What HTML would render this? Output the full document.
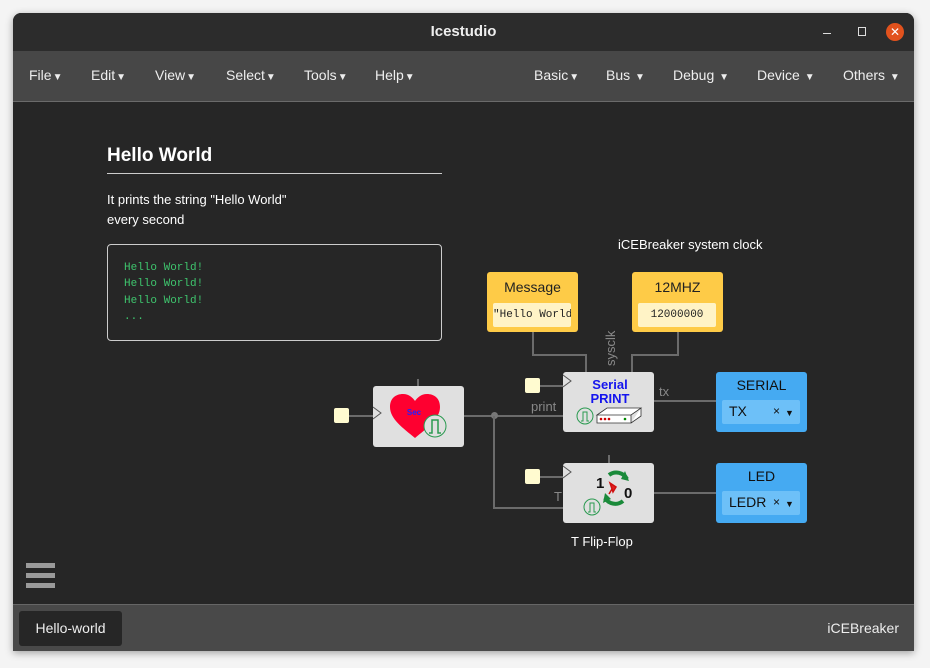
<!DOCTYPE html><html><head><style>
body{margin:0;width:930px;height:668px;background:#f4f4f4;font-family:"Liberation Sans",sans-serif;overflow:hidden;position:relative}
.win{position:absolute;left:13px;top:13px;width:901px;height:638px;background:#262626;border-radius:8px 8px 0 0;overflow:hidden;box-shadow:0 2px 8px rgba(0,0,0,.35)}
.title{position:absolute;left:0;top:0;width:901px;height:38px;background:#2c2c2c;color:#eee;font-weight:bold;font-size:15px;text-align:center;line-height:38px}
.menu{position:absolute;left:0;top:38px;width:901px;height:50px;background:#474747;border-bottom:1px solid #6a6a6a;color:#eee;font-size:14px}
.menu span{position:absolute;top:16px}
.menu i{font-style:normal;font-size:10px;margin-left:1px}
.foot{position:absolute;left:0;top:591px;width:901px;height:47px;background:#494949;border-top:1px solid #666;color:#eee;font-size:14px}
.a{position:absolute}
.blk{position:absolute;background:#e0e0e0;border-radius:3px}
.sq{position:absolute;width:15px;height:15px;background:#fffbd0;border-radius:2px}
.w{position:absolute;background:#6b6b6b}
.y{position:absolute;background:#fecb47;border-radius:3px;text-align:center;font-size:14px;color:#222}
.bl{position:absolute;background:#45aaf2;border-radius:3px;text-align:center;font-size:14px;color:#111}
.in{position:absolute;left:6px;top:28px;width:78px;height:24px;background:#6dc0f8;border-radius:2px;text-align:left;line-height:22px;font-size:14px}
</style></head><body>
<div class="win">
<div class="title">Icestudio
<span class="a" style="left:810px;top:20px;width:8px;height:1px;background:#ddd"></span>
<span class="a" style="left:845px;top:14px;width:6px;height:7px;border:1px solid #ddd"></span>
<span class="a" style="left:873px;top:10px;width:18px;height:18px;border-radius:50%;background:#e2521d;color:#fff;font-size:12px;line-height:18px;font-weight:normal">✕</span>
</div>
<div class="menu">
<span style="left:16px">File<i>▼</i></span><span style="left:78px">Edit<i>▼</i></span><span style="left:142px">View<i>▼</i></span><span style="left:213px">Select<i>▼</i></span><span style="left:291px">Tools<i>▼</i></span><span style="left:362px">Help<i>▼</i></span>
<span style="left:521px">Basic<i>▼</i></span><span style="left:593px">Bus <i>▼</i></span><span style="left:660px">Debug <i>▼</i></span><span style="left:744px">Device <i>▼</i></span><span style="left:830px">Others <i>▼</i></span>
</div>
<div class="a" style="left:94px;top:132px;color:#fff;font-size:19px;font-weight:bold">Hello World</div>
<div class="a" style="left:94px;top:160px;width:335px;height:1px;background:#ccc"></div>
<div class="a" style="left:94px;top:177px;color:#fff;font-size:13px;line-height:20px">It prints the string "Hello World"<br>every second</div>
<div class="a" style="left:94px;top:231px;width:335px;height:97px;border:1px solid #ccc;border-radius:4px;font-family:'Liberation Mono',monospace;font-size:11px;color:#3ec46d;line-height:16.3px;padding:15px 0 0 16px;box-sizing:border-box">Hello World!<br>Hello World!<br>Hello World!<br>...</div>
<div class="a" style="left:605px;top:224px;color:#fff;font-size:13px">iCEBreaker system clock</div>
<div class="w" style="left:336px;top:402px;width:24px;height:2px"></div>
<div class="w" style="left:451px;top:402px;width:99px;height:2px"></div>
<div class="a" style="left:478px;top:399px;width:7px;height:7px;border-radius:50%;background:#777"></div>
<div class="w" style="left:480px;top:403px;width:2px;height:92px"></div>
<div class="w" style="left:480px;top:494px;width:70px;height:2px"></div>
<div class="w" style="left:404px;top:366px;width:2px;height:8px"></div>
<div class="w" style="left:595px;top:442px;width:2px;height:8px"></div>
<div class="w" style="left:527px;top:372px;width:23px;height:2px"></div>
<div class="w" style="left:527px;top:463px;width:23px;height:2px"></div>
<div class="w" style="left:519px;top:319px;width:2px;height:23px"></div>
<div class="w" style="left:519px;top:341px;width:55px;height:2px"></div>
<div class="w" style="left:572px;top:341px;width:2px;height:18px"></div>
<div class="w" style="left:664px;top:319px;width:2px;height:23px"></div>
<div class="w" style="left:618px;top:341px;width:48px;height:2px"></div>
<div class="w" style="left:618px;top:341px;width:2px;height:18px"></div>
<div class="w" style="left:641px;top:387px;width:62px;height:2px"></div>
<div class="w" style="left:641px;top:479px;width:62px;height:2px"></div>
<div class="a" style="left:518px;top:386px;color:#888;font-size:13px">print</div>
<div class="a" style="left:646px;top:371px;color:#888;font-size:13px">tx</div>
<div class="a" style="left:541px;top:476px;color:#888;font-size:13px">T</div>
<div class="a" style="left:590px;top:353px;color:#888;font-size:13px;transform:rotate(-90deg);transform-origin:0 0;white-space:nowrap">sysclk</div>
<div class="sq" style="left:321px;top:395px"></div>
<div class="sq" style="left:512px;top:365px"></div>
<div class="sq" style="left:512px;top:456px"></div>
<div class="blk" style="left:360px;top:373px;width:91px;height:61px">
<svg width="91" height="61" style="position:absolute;left:0;top:0"><path d="M0 21l8 6l-8 6" fill="none" stroke="#555"/><path d="M42 52C30 42 17 33 17 21C17 12 23 8 30 8C36 8 40 12 42 15C44 12 48 8 54 8C61 8 67 12 67 21C67 33 54 42 42 52Z" fill="#fe0030"/><text x="41" y="29" font-size="8" font-weight="bold" fill="#2020ff" text-anchor="middle" font-family="Liberation Sans">Sec</text><circle cx="62" cy="40" r="11" fill="#e0e0e0" stroke="#2a9a50"/><path d="M56 47h3v-13h6v13h3" fill="none" stroke="#2a9a50" stroke-width="1.5"/></svg>
</div>
<div class="blk" style="left:550px;top:359px;width:91px;height:60px">
<svg width="91" height="60" style="position:absolute;left:0;top:0"><path d="M0 3l8 6l-8 6" fill="none" stroke="#555"/><text x="47" y="17" font-size="13" font-weight="bold" fill="#1515ee" text-anchor="middle" font-family="Liberation Sans">Serial</text><text x="47" y="31" font-size="13" font-weight="bold" fill="#1515ee" text-anchor="middle" font-family="Liberation Sans">PRINT</text><circle cx="22" cy="44" r="8" fill="none" stroke="#2a9a50"/><path d="M18 49h2v-9h4v9h2" fill="none" stroke="#2a9a50"/><path d="M34 43l10-7h34l-10 7zM34 43h34v8h-34zM68 51l10-7v-8" fill="#fff" stroke="#333" stroke-width=".8"/><circle cx="38" cy="47" r="1.3" fill="#c00"/><circle cx="42" cy="47" r="1.3" fill="#c00"/><circle cx="46" cy="47" r="1.3" fill="#c00"/><circle cx="62" cy="47" r="1.3" fill="#080"/></svg>
</div>
<div class="blk" style="left:550px;top:450px;width:91px;height:60px">
<svg width="91" height="60" style="position:absolute;left:0;top:0"><path d="M0 3l8 6l-8 6" fill="none" stroke="#555"/><text x="33" y="25" font-size="15" font-weight="bold" fill="#111" font-family="Liberation Sans">1</text><text x="61" y="35" font-size="15" font-weight="bold" fill="#111" font-family="Liberation Sans">0</text><path d="M46 12a12 12 0 0 1 18 4" fill="none" stroke="#1a8a3a" stroke-width="4"/><path d="M62 8l4 10l-8 -2z" fill="#1a8a3a"/><path d="M60 38a12 12 0 0 1 -18 -3" fill="none" stroke="#1a8a3a" stroke-width="4"/><path d="M40 40l2-10l6 6z" fill="#1a8a3a"/><path d="M47 20l6 4l-3 5zM49 26l-3 5" stroke="#d01010" fill="#e02020" stroke-width="1.5"/><circle cx="29" cy="44" r="8" fill="none" stroke="#2a9a50"/><path d="M25 49h2v-9h4v9h2" fill="none" stroke="#2a9a50"/></svg>
</div>
<div class="a" style="left:558px;top:521px;color:#fff;font-size:13px">T Flip-Flop</div>
<div class="y" style="left:474px;top:259px;width:91px;height:60px"><div style="margin-top:7px">Message</div><div class="a" style="left:6px;top:31px;width:78px;height:24px;background:#fff3c6;border-radius:2px;font-family:'Liberation Mono',monospace;font-size:11px;line-height:24px;overflow:hidden;white-space:nowrap;text-align:left">"Hello World!"</div></div>
<div class="y" style="left:619px;top:259px;width:91px;height:60px"><div style="margin-top:7px">12MHZ</div><div class="a" style="left:6px;top:31px;width:78px;height:24px;background:#fff3c6;border-radius:2px;font-family:'Liberation Mono',monospace;font-size:11px;line-height:24px">12000000</div></div>
<div class="bl" style="left:703px;top:359px;width:91px;height:60px"><div style="margin-top:5px">SERIAL</div><div class="in"><span style="margin-left:7px">TX</span><span class="a" style="left:51px;top:0;font-size:12px">×</span><span class="a" style="left:63px;top:2px;font-size:9px">▼</span></div></div>
<div class="bl" style="left:703px;top:450px;width:91px;height:60px"><div style="margin-top:5px">LED</div><div class="in"><span style="margin-left:7px">LEDR</span><span class="a" style="left:51px;top:0;font-size:12px">×</span><span class="a" style="left:63px;top:2px;font-size:9px">▼</span></div></div>
<div class="a" style="left:13px;top:550px;width:29px;height:5px;background:#9a9a9a"></div>
<div class="a" style="left:13px;top:560px;width:29px;height:5px;background:#9a9a9a"></div>
<div class="a" style="left:13px;top:570px;width:29px;height:5px;background:#9a9a9a"></div>
<div class="foot">
<div class="a" style="left:6px;top:6px;width:103px;height:35px;background:#262626;border-radius:3px;text-align:center;line-height:34px">Hello-world</div>
<div class="a" style="right:15px;top:15px">iCEBreaker</div>
</div>
</div>
</body></html>
